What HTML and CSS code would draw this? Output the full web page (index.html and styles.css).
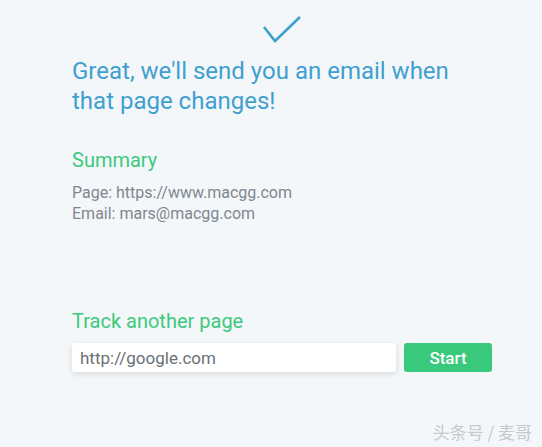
FILE: index.html
```html
<!DOCTYPE html>
<html lang="en">
<head>
    <meta charset="UTF-8">
    <meta name="viewport" content="width=device-width, initial-scale=1.0">
    <title>Page tracked</title>
    <link rel="stylesheet" href="styles.css">
</head>
<body>

    <div class="done">
        <div class="check">
            <svg width="40" height="30" viewBox="0 0 40 30">
                <path d="M2 13 L13 27 L38 3" fill="none" stroke="#3fa0d0" stroke-width="2.6"/>
            </svg>
        </div>

        <h1>Great, we'll send you an email when that page changes!</h1>

        <h3>Summary</h3>
        <p class="info">Page: https://www.macgg.com</p>
        <p class="info">Email: mars@macgg.com</p>

        <h3 class="another">Track another page</h3>
        <form class="track-form">
            <input type="text" value="http://google.com">
            <button type="submit">Start</button>
        </form>
    </div>

    <div class="watermark">头条号 / 麦哥</div>

</body>
</html>
```

FILE: styles.css
```css
body {
    margin: 0;
    font-family: Roboto, "Noto Sans", sans-serif;
    background-color: #f4f7fa;
    height: 447px;
    position: relative;
}
.done {
    width: 420px;
    padding: 14px 0 0 72px;
}
.check {
    display: flex;
    justify-content: center;
    height: 30px;
}
h1 {
    margin: 12px 0 0;
    width: 400px;
    font-size: 24px;
    line-height: 30px;
    font-weight: 400;
    color: #3fa0d0;
}
h3 {
    margin: 32px 0 10px;
    font-size: 20px;
    line-height: 24px;
    font-weight: 400;
    color: #3cc97c;
}
.info {
    margin: 0;
    font-size: 16px;
    line-height: 21px;
    color: #80868e;
}
h3.another {
    margin-top: 85px;
    margin-bottom: 10px;
}
.track-form {
    display: flex;
    gap: 8px;
}
input {
    width: 324px;
    height: 29px;
    box-sizing: border-box;
    border: none;
    border-radius: 3px;
    padding: 0 8px;
    font-family: Roboto, sans-serif;
    font-size: 17px;
    color: #6a6f77;
    background: white;
    box-shadow: 0 2px 6px rgba(0, 0, 0, 0.12);
    outline: none;
}
button {
    width: 88px;
    height: 29px;
    border: none;
    border-radius: 3px;
    background: #38c97c;
    color: white;
    font-family: Roboto, sans-serif;
    font-size: 17px;
    font-weight: 500;
    cursor: pointer;
}
.watermark {
    position: absolute;
    right: 10px;
    bottom: 3px;
    font-family: "Noto Sans CJK SC", sans-serif;
    font-size: 17px;
    color: #c8c9cb;
}
```
